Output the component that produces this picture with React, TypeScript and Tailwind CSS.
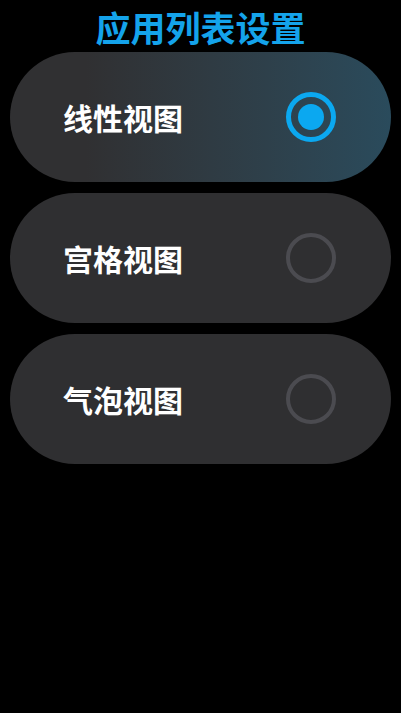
import React from "react";

const items = [
  { label: "线性视图", selected: true },
  { label: "宫格视图", selected: false },
  { label: "气泡视图", selected: false },
];

export default function App() {
  return (
    <div
      className="w-[401px] h-[713px] bg-black overflow-hidden"
      style={{ fontFamily: '"Noto Sans CJK SC", "Noto Sans", sans-serif' }}
    >
      <div className="h-[52px] flex items-center justify-center text-[35px] font-bold text-[#14a3eb] leading-none">
        应用列表设置
      </div>
      <div className="flex flex-col gap-[11px] px-[10px]">
        {items.map((it) => (
          <div
            key={it.label}
            className={
              "h-[130px] rounded-full flex items-center justify-between pl-[53px] pr-[55px] " +
              (it.selected
                ? "bg-gradient-to-r from-[#303032] from-[20%] to-[#2a4b5c]"
                : "bg-[#2f2f31]")
            }
          >
            <span className="text-[30px] font-bold text-white leading-none">{it.label}</span>
            {it.selected ? (
              <div className="w-[50px] h-[50px] rounded-full border-[5px] border-[#0ba8f0] flex items-center justify-center">
                <div className="w-[26px] h-[26px] rounded-full bg-[#0ba8f0]" />
              </div>
            ) : (
              <div className="w-[50px] h-[50px] rounded-full border-[4px] border-[#4b4b50]" />
            )}
          </div>
        ))}
      </div>
    </div>
  );
}
